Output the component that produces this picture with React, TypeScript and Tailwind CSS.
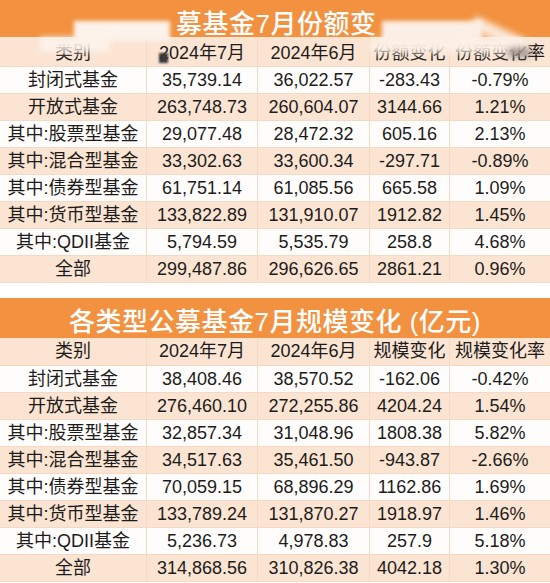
import type { ReactNode } from 'react'

type Row = [string, string, string, string, string]

const cols = ['w-[147px]', 'w-[111px]', 'w-[112px]', 'w-[80px]', 'w-[100px]']

const shareRows: Row[] = [
  ['封闭式基金', '35,739.14', '36,022.57', '-283.43', '-0.79%'],
  ['开放式基金', '263,748.73', '260,604.07', '3144.66', '1.21%'],
  ['其中:股票型基金', '29,077.48', '28,472.32', '605.16', '2.13%'],
  ['其中:混合型基金', '33,302.63', '33,600.34', '-297.71', '-0.89%'],
  ['其中:债券型基金', '61,751.14', '61,085.56', '665.58', '1.09%'],
  ['其中:货币型基金', '133,822.89', '131,910.07', '1912.82', '1.45%'],
  ['其中:QDII基金', '5,794.59', '5,535.79', '258.8', '4.68%'],
  ['全部', '299,487.86', '296,626.65', '2861.21', '0.96%'],
]

const scaleRows: Row[] = [
  ['封闭式基金', '38,408.46', '38,570.52', '-162.06', '-0.42%'],
  ['开放式基金', '276,460.10', '272,255.86', '4204.24', '1.54%'],
  ['其中:股票型基金', '32,857.34', '31,048.96', '1808.38', '5.82%'],
  ['其中:混合型基金', '34,517.63', '35,461.50', '-943.87', '-2.66%'],
  ['其中:债券型基金', '70,059.15', '68,896.29', '1162.86', '1.69%'],
  ['其中:货币型基金', '133,789.24', '131,870.27', '1918.97', '1.46%'],
  ['其中:QDII基金', '5,236.73', '4,978.83', '257.9', '5.18%'],
  ['全部', '314,868.56', '310,826.38', '4042.18', '1.30%'],
]

function TableRow({ cells, peach, height }: { cells: string[]; peach: boolean; height: string }) {
  return (
    <div
      className={`flex ${height} border-b border-[#f4d9c6] ${peach ? 'bg-[#fbe4d2]' : 'bg-[#fffdfb]'}`}
    >
      {cells.map((c, i) => (
        <div
          key={i}
          className={`${cols[i]} flex items-center justify-center whitespace-nowrap ${
            i < 4 ? 'border-r border-[#f4d9c6]' : ''
          }`}
        >
          {c}
        </div>
      ))}
    </div>
  )
}

interface FundTableProps {
  title: string
  titleClass: string
  head: string[]
  rows: Row[]
  headHeight: string
  children?: ReactNode
}

function FundTable({ title, titleClass, head, rows, headHeight, children }: FundTableProps) {
  return (
    <div className="relative">
      <div
        className={`${titleClass} bg-[#f2913f] flex items-center text-white text-[26px] font-medium tracking-[0.5px] whitespace-nowrap`}
      >
        {title}
      </div>
      <TableRow cells={head} peach height={headHeight} />
      {rows.map((r, i) => (
        <TableRow key={r[0]} cells={r} peach={i % 2 === 1} height="h-[27px]" />
      ))}
      {children}
    </div>
  )
}

export default function App() {
  return (
    <div
      className="w-[550px] h-[583px] overflow-hidden bg-white text-[18px] text-[#1c1c1c]"
      style={{ fontFamily: '"Liberation Sans", "Noto Sans CJK SC", sans-serif' }}
    >
      <FundTable
        title="募基金7月份额变"
        titleClass="h-[37px] justify-start pl-[176px] pt-3"
        head={['类别', '2024年7月', '2024年6月', '份额变化', '份额变化率']}
        rows={shareRows}
        headHeight="h-[30px] pt-1"
      >
        {/* erased patches over the first title and its header */}
        <div className="absolute left-[74px] top-[21px] w-[96px] h-[20px] bg-[#fdf3ec] blur-[2px]" />
        <div className="absolute left-[40px] top-[37px] w-[70px] h-[15px] bg-[#fdf3ec]/90 blur-[3px]" />
        <div className="absolute left-[382px] top-[21px] w-[100px] h-[24px] bg-[#fcefe5] blur-[2px]" />
        <div className="absolute left-[370px] top-[39px] w-[150px] h-[14px] bg-[#fcefe5]/95 blur-[3px]" />
        <div className="absolute left-[470px] top-[28px] w-[60px] h-[14px] bg-[#fcefe5]/90 blur-[3px] rotate-[25deg]" />
        <div className="absolute left-[508px] top-[48px] w-[22px] h-[9px] bg-[#7a7370]/70 blur-[3px]" />
        <div className="absolute left-[159px] top-[53px] w-[9px] h-[10px] bg-[#3a3a3a] blur-[1px]" />
      </FundTable>
      <div className="h-[15px]" />
      <FundTable
        title="各类型公募基金7月规模变化 (亿元)"
        titleClass="h-[40px] justify-center pt-2"
        head={['类别', '2024年7月', '2024年6月', '规模变化', '规模变化率']}
        rows={scaleRows}
        headHeight="h-[28px]"
      />
    </div>
  )
}
